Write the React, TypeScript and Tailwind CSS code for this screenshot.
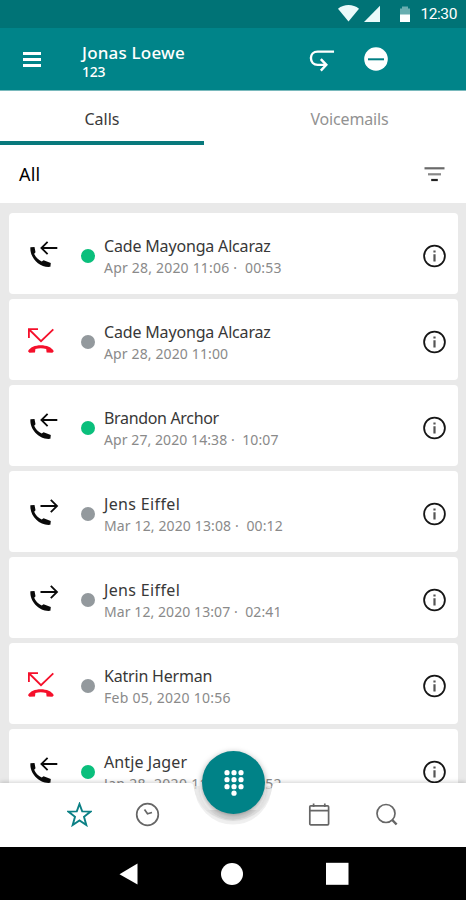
import { clsx } from "clsx";

type CallType = "incoming" | "outgoing" | "missed";

interface Call {
  name: string;
  date: string;
  duration?: string;
  type: CallType;
  online?: boolean;
  nameClass: string;
  dateClass: string;
}

const calls: Call[] = [
  { name: "Cade Mayonga Alcaraz", date: "Apr 28, 2020 11:06", duration: "00:53", type: "incoming", online: true, nameClass: "tracking-[-0.17px]", dateClass: "tracking-[0.2px]" },
  { name: "Cade Mayonga Alcaraz", date: "Apr 28, 2020 11:00", type: "missed", nameClass: "tracking-[-0.17px]", dateClass: "tracking-[0.13px]" },
  { name: "Brandon Archor", date: "Apr 27, 2020 14:38", duration: "10:07", type: "incoming", online: true, nameClass: "tracking-[-0.33px]", dateClass: "tracking-[0.08px]" },
  { name: "Jens Eiffel", date: "Mar 12, 2020 13:08", duration: "00:12", type: "outgoing", nameClass: "tracking-[0.35px]", dateClass: "tracking-[0.13px]" },
  { name: "Jens Eiffel", date: "Mar 12, 2020 13:07", duration: "02:41", type: "outgoing", nameClass: "tracking-[0.35px]", dateClass: "tracking-[0.08px]" },
  { name: "Katrin Herman", date: "Feb 05, 2020 10:56", type: "missed", nameClass: "tracking-[-0.2px]", dateClass: "tracking-[0.25px]" },
  { name: "Antje Jager", date: "Jan 28, 2020 11:02", duration: "00:52", type: "incoming", online: true, nameClass: "tracking-[0.1px]", dateClass: "tracking-[0.32px]" },
];

function CallIcon({ type }: { type: CallType }) {
  if (type === "missed") {
    return (
      <svg width="30" height="30" viewBox="0 0 30 30" fill="none" className="-mt-[3px] ml-4">
        <path d="M3.9 13V4.2H13M4.2 4.5L16 16.2L28.3 4.4" stroke="#f5102b" strokeWidth="1.8" />
        <path d="M3 26.2C5 22.2 10 20.2 15.8 20.2S26.8 22.2 28.8 26.2L27.4 27.8L21.6 27.4L21.2 24C17.8 23 13.8 23 10.4 24L10 27.4L4.4 27.8Z" fill="#f5102b" />
      </svg>
    );
  }
  return (
    <svg width="30" height="30" viewBox="0 0 30 30" fill="none" className="ml-5">
      <path d="M1.4 6.3L5.5 6L6.5 11.2L5.2 12.7C6.4 15.9 9.1 18.8 12.7 20.4L14.6 19.3L21.8 22L21.4 25.8C10.5 27 0.6 16.8 1.4 6.3Z" fill="#0a0a0a" />
      {type === "incoming" ? (
        <path d="M28.3 7H12.6M18.6 0.8L12.4 7L18.6 13.2" stroke="#0a0a0a" strokeWidth="1.8" />
      ) : (
        <path d="M11.5 7H27.8M21.8 0.8L28 7L21.8 13.2" stroke="#0a0a0a" strokeWidth="1.8" />
      )}
    </svg>
  );
}

function InfoIcon() {
  return (
    <svg width="24" height="24" viewBox="0 0 24 24" fill="none">
      <circle cx="12.5" cy="12" r="10.4" stroke="#161616" strokeWidth="1.8" />
      <path d="M12.5 10.2V17.5M12.5 6.5V8.6" stroke="#555" strokeWidth="2.2" />
    </svg>
  );
}

function CallCard({ call }: { call: Call }) {
  return (
    <div className="flex h-[81px] shrink-0 items-center rounded-[4px] bg-white pt-1">
      <div className="w-[72px] shrink-0">
        <CallIcon type={call.type} />
      </div>
      <div className={clsx("size-[14px] shrink-0 rounded-full", call.online ? "bg-[#0abf7c]" : "bg-[#93999d]")} />
      <div className="ml-[9px] flex-1 pt-px whitespace-nowrap">
        <p className={clsx("text-[16px] leading-[23px] text-[#383838]", call.nameClass)}>{call.name}</p>
        <p className={clsx("text-[14px] leading-[20px] text-[#8a8a8a]", call.dateClass)}>
          {call.date}
          {call.duration && <span> ·&nbsp; {call.duration}</span>}
        </p>
      </div>
      <div className="mr-[12px]">
        <InfoIcon />
      </div>
    </div>
  );
}

function StatusBar() {
  return (
    <div className="flex h-7 shrink-0 items-center justify-end bg-[#007376] pr-[9px] text-white">
      <svg width="74" height="20" viewBox="0 0 74 20">
        <path d="M0 4.8C6 -0.2 15 -0.2 21 4.8L10.5 17.5Z" fill="#eafafa" />
        <path d="M42 1.8V18H26Z" fill="#eafafa" />
        <path d="M62 4.5H64V2.5H70V4.5H72V11H62Z" fill="#69aeb0" />
        <path d="M62 10.5H72V18H62Z" fill="#fff" />
      </svg>
      <span className="ml-2 font-['Roboto'] text-[15.5px] leading-5 tracking-[-0.4px]">12:30</span>
    </div>
  );
}

function Header() {
  return (
    <header className="flex h-[63px] shrink-0 items-center border-b border-[#79b9bc] bg-[#008489] text-white">
      <div className="ml-[23px] flex w-[18px] flex-col gap-[3px]">
        <div className="h-[3px] bg-white" />
        <div className="h-[3px] bg-white" />
        <div className="h-[3px] bg-white" />
      </div>
      <div className="ml-[41px] w-[227px] pt-[6px]">
        <p className="text-[17px] leading-[20px] font-medium tracking-[0.2px]">Jonas Loewe</p>
        <p className="text-[14px] leading-[18px] font-medium tracking-[-0.3px]">123</p>
      </div>
      <svg width="26" height="25" viewBox="0 0 27 25" fill="none" stroke="#fff" strokeWidth="2.5" className="mt-[2px]">
        <path d="M26 3.3H9C4.5 3.3 2 6.5 2 10C2 14 4.8 17 9 17H17" />
        <path d="M12.3 11L18 17L12.3 23" />
      </svg>
      <svg width="24" height="24" viewBox="0 0 24 24" className="ml-[29px]">
        <circle cx="12" cy="12" r="11.8" fill="#fff" />
        <path d="M4 12.3H20" stroke="#007f84" strokeWidth="2" />
      </svg>
    </header>
  );
}

function Tabs() {
  return (
    <div className="flex h-[54px] shrink-0 bg-white text-[16px]">
      <div className="flex w-[204px] items-center justify-center border-b-[4px] border-[#08797c] pt-[5px] text-[#3a3a3a]">Calls</div>
      <div className="flex flex-1 items-center justify-center pt-px pl-[29px] tracking-[-0.15px] text-[#929292]">Voicemails</div>
    </div>
  );
}

function BottomBar() {
  return (
    <div className="relative z-10 -mt-[64px] h-[64px] shrink-0">
      {/* bar surface with the cut-out for the dialpad button */}
      <svg width="466" height="64" viewBox="0 0 466 64" className="absolute inset-0 overflow-visible">
        <path
          d="M0 0H190Q193 0 193.5 3A39.8 39.8 0 0 0 272.5 3Q273 0 276 0H466V64H0Z"
          fill="#fff"
          className="drop-shadow-[0_-1px_2px_rgba(0,0,0,0.18)]"
        />
        <path d="M197 3A36 36 0 0 0 269 3" fill="none" stroke="#e9e9e9" strokeWidth="5" strokeOpacity="0.7" />
      </svg>
      <div className="absolute -top-8 left-[202px] flex size-[63px] items-center justify-center rounded-full bg-[#008287] shadow-[0_2px_6px_rgba(0,0,0,0.4)]">
        <svg width="20" height="26" viewBox="0 0 20 26" fill="#fff">
          {[2.7, 9.7, 16.7].map((y) => [3, 10, 17].map((x) => <circle key={`${x}-${y}`} cx={x} cy={y} r="2.6" />))}
          <circle cx="10" cy="23.2" r="2.6" />
        </svg>
      </div>
      <div className="relative flex h-full items-center justify-between pr-[67px] pb-[2px] pl-[67px]">
        <div className="flex gap-[43px]">
          <svg width="25" height="25" viewBox="0 0 25 25" fill="none" stroke="#0b8085" strokeWidth="1.9">
            <path d="M12.5 2L15.2 9.4L23.6 9.6L17 14.8L19.3 23L12.5 18.4L5.7 23L8 14.8L1.4 9.6L9.8 9.4Z" />
          </svg>
          <svg width="25" height="25" viewBox="0 0 25 25" fill="none" stroke="#666" strokeWidth="1.7">
            <circle cx="12.5" cy="12.5" r="10.8" />
            <path d="M9.5 7.5L12.5 11.7L17 10.5" />
          </svg>
        </div>
        <div className="flex gap-[43px]">
          <svg width="24" height="25" viewBox="0 0 24 25" fill="none" stroke="#666" strokeWidth="1.7">
            <rect x="2.8" y="3.8" width="18.8" height="19" rx="1" />
            <path d="M2.8 8.6H21.6M6.6 1.5V5M17.8 1.5V5" />
          </svg>
          <svg width="25" height="25" viewBox="0 0 25 25" fill="none" stroke="#666" strokeWidth="1.7">
            <circle cx="12" cy="11.5" r="9" />
            <path d="M18.3 18L22.6 22.5" strokeWidth="2.5" />
          </svg>
        </div>
      </div>
    </div>
  );
}

function AndroidNav() {
  return (
    <div className="flex h-[53px] shrink-0 items-center bg-black pl-[119px]">
      <svg width="230" height="24" viewBox="0 0 230 24" fill="#fff">
        <path d="M0.5 12.2L18.5 1.5V22.5Z" />
        <circle cx="113" cy="12" r="11" />
        <rect x="207" y="0.8" width="22.5" height="22" />
      </svg>
    </div>
  );
}

export default function App() {
  return (
    <div className="flex h-[900px] w-[466px] flex-col overflow-hidden bg-white font-['Noto_Sans',sans-serif]">
      <StatusBar />
      <Header />
      <Tabs />
      <div className="flex h-[58px] shrink-0 items-center justify-between bg-white pr-[21px] pl-[19px]">
        <span className="text-[18px] tracking-[0.2px] text-black">All</span>
        <svg width="21" height="16" viewBox="0 0 21 16" fill="none" strokeWidth="2.2">
          <path d="M0.5 2.3H20.5" stroke="#6a6a6a" />
          <path d="M4 8.3H17" stroke="#888" />
          <path d="M7.2 14H13.8" stroke="#222" />
        </svg>
      </div>
      <main className="flex min-h-0 flex-1 flex-col gap-[5px] overflow-hidden bg-[#e9e9e9] pt-[10px] pr-2 pl-[9px]">
        {calls.map((call, i) => (
          <CallCard key={i} call={call} />
        ))}
      </main>
      <BottomBar />
      <AndroidNav />
    </div>
  );
}
